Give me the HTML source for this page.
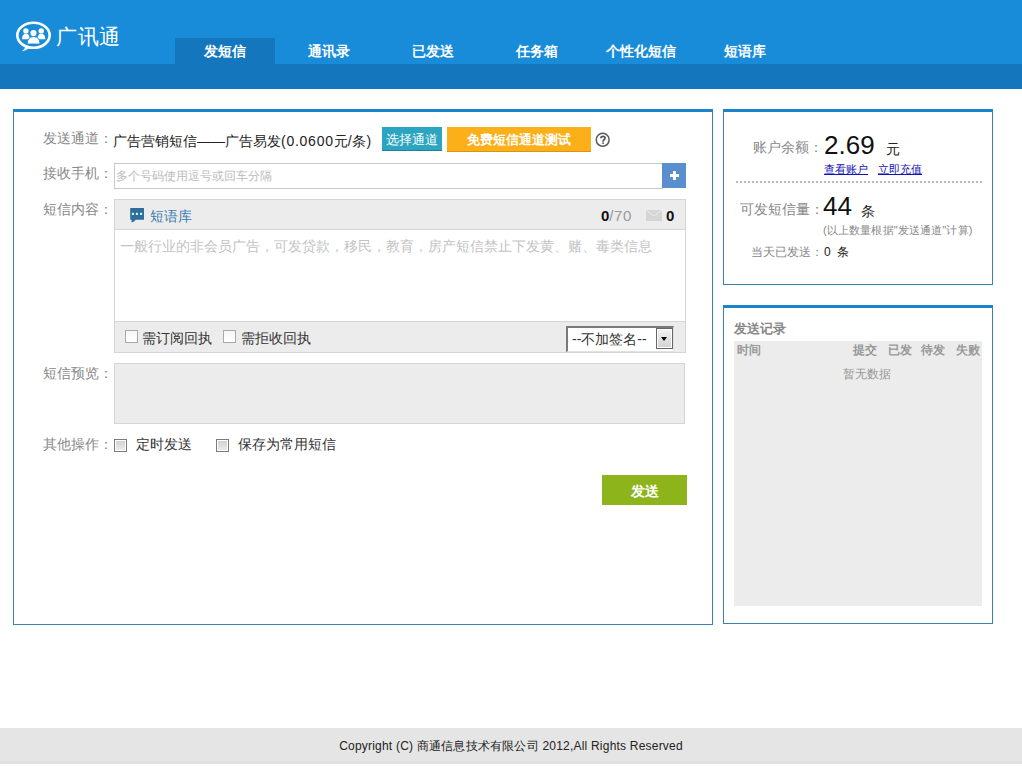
<!DOCTYPE html>
<html><head><meta charset="utf-8">
<style>
*{margin:0;padding:0;box-sizing:border-box}
html,body{width:1022px;height:766px;overflow:hidden;background:#fff;font-family:"Liberation Sans",sans-serif;font-size:14px;color:#333}
.a{position:absolute;white-space:nowrap}
#hdr{position:absolute;left:0;top:0;width:1022px;height:64px;background:#188bd9}
#band{position:absolute;left:0;top:64px;width:1022px;height:25px;background:#1477bd}
.tab{position:absolute;top:38px;width:100px;height:26px;color:#fff;font-weight:bold;font-size:14px;text-align:center;line-height:27px}
.tab.on{background:#1477bd}
.panel{position:absolute;border:1px solid #3a82b0;border-top:3px solid #1c84cd;background:#fff}
.lbl{color:#888;font-size:14px}
.box{position:absolute;border:1px solid #d5d5d5}
</style></head><body>
<div id="hdr"></div>
<div id="band"></div>
<!-- logo -->
<svg class="a" style="left:12px;top:18px" width="44" height="38" viewBox="12 18 44 38">
  <ellipse cx="33.5" cy="35.3" rx="16.2" ry="12.5" fill="none" stroke="#fff" stroke-width="2.6"/>
  <path d="M21.8 51.6 Q25 48.5 26.5 45.5 L30.5 47.2 Q26 50.5 21.8 51.6 Z" fill="#fff"/>
  <circle cx="25.9" cy="30.9" r="2.7" fill="#fff"/>
  <path d="M22 39.2 Q22.2 33.8 25.9 33.8 Q29.6 33.8 29.8 39.2 Z" fill="#fff"/>
  <circle cx="41.2" cy="30.9" r="2.7" fill="#fff"/>
  <path d="M37.4 39.2 Q37.6 33.8 41.3 33.8 Q45 33.8 45.4 39.2 Z" fill="#fff"/>
  <circle cx="33.5" cy="33" r="3.9" fill="#188bd9"/>
  <circle cx="33.5" cy="33" r="3.1" fill="#fff"/>
  <path d="M27.2 44 Q27.4 36.6 33.6 36.6 Q39.8 36.6 40 44 Z" fill="#fff" stroke="#188bd9" stroke-width="0.9"/>
</svg>
<div class="a" style="left:56px;top:23px;font-size:21px;letter-spacing:.6px;color:#fff;line-height:28px">广讯通</div>

<div class="tab on" style="left:175px">发短信</div>
<div class="tab" style="left:279px">通讯录</div>
<div class="tab" style="left:383px">已发送</div>
<div class="tab" style="left:487px">任务箱</div>
<div class="tab" style="left:591px">个性化短信</div>
<div class="tab" style="left:695px">短语库</div>

<!-- left panel -->
<div class="panel" style="left:13px;top:109px;width:700px;height:516px"></div>

<div class="a lbl" style="left:43px;top:128px;line-height:20px">发送通道：</div>
<div class="a" style="left:113px;top:131px;line-height:20px;color:#222">广告营销短信——广告易发<span style="letter-spacing:.75px">(0.0600</span>元<span style="letter-spacing:.75px">/</span>条)</div>
<div class="a" style="left:382px;top:127px;width:60px;height:24px;background:#2ca5c0;border-bottom:1px solid #1f7f98;color:#fff;font-size:12.5px;line-height:26px;text-align:center">选择通道</div>
<div class="a" style="left:447px;top:127px;width:144px;height:25px;background:#fbaf18;border-bottom:1px solid #d99317;color:#fff;font-size:13px;font-weight:bold;line-height:26px;text-align:center">免费短信通道测试</div>
<svg class="a" style="left:594px;top:132px" width="17" height="17" viewBox="0 0 17 17"><circle cx="8.7" cy="7.8" r="6.45" fill="none" stroke="#5a5a5a" stroke-width="1.5"/><path d="M6.9 6.3 C6.9 4.9 7.8 4.4 9 4.4 C10.3 4.4 11.1 5.1 11.1 6.1 C11.1 7.1 10.3 7.5 9.7 8 C9.2 8.5 9.05 9 9.05 9.7" fill="none" stroke="#555" stroke-width="1.7"/><rect x="8.1" y="10.5" width="1.9" height="1.3" fill="#555"/></svg>

<div class="a lbl" style="left:43px;top:163px;line-height:20px">接收手机：</div>
<div class="box" style="left:114px;top:163px;width:549px;height:26px;border-color:#c8c8c8"></div>
<div class="a" style="left:116px;top:168px;font-size:12px;color:#bbb;line-height:16px">多个号码使用逗号或回车分隔</div>
<div class="a" style="left:662px;top:163px;width:24px;height:25px;background:#5a8fcf"></div>
<div class="a" style="left:670px;top:171px;width:9px;height:3px;background:#fff;top:174px"></div>
<div class="a" style="left:673px;top:171px;width:3px;height:9px;background:#fff"></div>

<div class="a lbl" style="left:43px;top:199px;line-height:20px">短信内容：</div>
<div class="box" style="left:114px;top:199px;width:572px;height:154px;background:#fff"></div>
<div class="a" style="left:115px;top:200px;width:570px;height:30px;background:#ececec;border-bottom:1px solid #d5d5d5"></div>
<svg class="a" style="left:129px;top:207px" width="16" height="17" viewBox="0 0 16 17"><path d="M1.2 1 H15 V12.8 H6.8 Q5 15.2 2 15.6 Q3 14.5 2.6 12.8 H1.2 Z" fill="#2f6e98"/><rect x="2.9" y="5.8" width="2.1" height="2.2" fill="#c8f4ff"/><rect x="6.9" y="5.8" width="2.1" height="2.2" fill="#c8f4ff"/><rect x="11" y="5.8" width="2.1" height="2.2" fill="#c8f4ff"/></svg>
<div class="a" style="left:150px;top:206px;color:#3b7db3;font-size:14px;line-height:20px">短语库</div>
<div class="a" style="left:601px;top:206px;line-height:20px;font-size:15px"><b style="color:#111">0</b><span style="color:#999;letter-spacing:.6px">/70</span></div>
<svg class="a" style="left:646px;top:210px" width="16" height="11" viewBox="0 0 16 11"><rect x="0" y="0" width="16" height="11" fill="#d5d5d5"/><path d="M0 0 L8 6 L16 0" fill="none" stroke="#ececec" stroke-width="1"/></svg>
<div class="a" style="left:666px;top:206px;line-height:20px;font-size:15px;font-weight:bold;color:#111">0</div>
<div class="a" style="left:120px;top:236px;font-size:14px;color:#c3c3c3;line-height:20px">一般行业的非会员广告，可发贷款，移民，教育，房产短信禁止下发黄、赌、毒类信息</div>
<div class="a" style="left:115px;top:321px;width:570px;height:31px;background:#ececec;border-top:1px solid #d5d5d5"></div>
<div class="a" style="left:125px;top:330px;width:13px;height:13px;background:linear-gradient(#f6f6f6,#fff);border:1px solid #a9a9a9"></div>
<div class="a" style="left:142px;top:328px;line-height:20px;color:#333">需订阅回执</div>
<div class="a" style="left:223px;top:330px;width:13px;height:13px;background:linear-gradient(#f6f6f6,#fff);border:1px solid #a9a9a9"></div>
<div class="a" style="left:241px;top:328px;line-height:20px;color:#333">需拒收回执</div>
<div class="a" style="left:566px;top:326px;width:108px;height:26px;background:#fff;border:1px solid #e2e2e2;border-top:2px solid #7a7a7a;border-left:2px solid #7a7a7a"></div>
<div class="a" style="left:572px;top:329px;line-height:20px;color:#333">--不加签名--</div>
<div class="a" style="left:656px;top:328px;width:17px;height:21px;border:1px solid #666;background:linear-gradient(#f2f2f2,#d2d2d2);box-shadow:inset 0 0 0 1px #fff"></div>
<div class="a" style="left:661px;top:337px;width:0;height:0;border-left:3.5px solid transparent;border-right:3.5px solid transparent;border-top:4px solid #000"></div>

<div class="a lbl" style="left:43px;top:363px;line-height:20px">短信预览：</div>
<div class="box" style="left:114px;top:363px;width:571px;height:61px;background:#ececec"></div>

<div class="a lbl" style="left:43px;top:434px;line-height:20px">其他操作：</div>
<div class="a" style="left:114px;top:439px;width:13px;height:13px;border:1px solid #7a7a7a;background:linear-gradient(#cfcfcf,#eee);box-shadow:inset 0 0 0 1px #fff"></div>
<div class="a" style="left:136px;top:434px;line-height:20px;color:#333">定时发送</div>
<div class="a" style="left:216px;top:439px;width:13px;height:13px;border:1px solid #7a7a7a;background:linear-gradient(#cfcfcf,#eee);box-shadow:inset 0 0 0 1px #fff"></div>
<div class="a" style="left:238px;top:434px;line-height:20px;color:#333">保存为常用短信</div>

<div class="a" style="left:602px;top:475px;width:85px;height:30px;background:#8db51b;color:#fff;font-weight:bold;font-size:14px;line-height:32px;text-align:center">发送</div>

<!-- right panel 1 -->
<div class="panel" style="left:723px;top:109px;width:270px;height:176px"></div>
<div class="a lbl" style="left:753px;top:137px;line-height:20px">账户余额：</div>
<div class="a" style="left:824px;top:130px;font-size:26px;line-height:30px;color:#111">2.69</div>
<div class="a" style="left:886px;top:139px;font-size:14px;line-height:20px;color:#222">元</div>
<div class="a" style="left:824px;top:161px;font-size:11px;line-height:16px;color:#1212b4;text-decoration:underline">查看账户</div>
<div class="a" style="left:878px;top:161px;font-size:11px;line-height:16px;color:#1212b4;text-decoration:underline">立即充值</div>
<div class="a" style="left:736px;top:181px;width:246px;height:0;border-top:2px dotted #bbb"></div>
<div class="a lbl" style="left:740px;top:199px;line-height:20px">可发短信量：</div>
<div class="a" style="left:823px;top:191px;font-size:26px;line-height:30px;color:#111">44</div>
<div class="a" style="left:861px;top:201px;font-size:14px;line-height:20px;color:#222">条</div>
<div class="a" style="left:823px;top:222px;font-size:11px;letter-spacing:.15px;line-height:16px;color:#888">(以上数量根据"发送通道"计算)</div>
<div class="a lbl" style="left:751px;top:243px;line-height:18px;font-size:12px">当天已发送：</div>
<div class="a" style="left:824px;top:243px;line-height:18px;font-size:12px;color:#222">0</div><div class="a" style="left:837px;top:243px;line-height:18px;font-size:12px;color:#222">条</div>

<!-- right panel 2 -->
<div class="panel" style="left:723px;top:305px;width:270px;height:319px"></div>
<div class="a" style="left:734px;top:320px;font-size:13px;font-weight:bold;color:#888;line-height:18px">发送记录</div>
<div class="a" style="left:734px;top:341px;width:248px;height:265px;background:#ececec"></div>
<div class="a" style="left:737px;top:342px;font-size:12px;font-weight:bold;color:#999;line-height:17px">时间</div>
<div class="a" style="left:853px;top:342px;font-size:12px;font-weight:bold;color:#999;line-height:17px">提交</div>
<div class="a" style="left:888px;top:342px;font-size:12px;font-weight:bold;color:#999;line-height:17px">已发</div>
<div class="a" style="left:921px;top:342px;font-size:12px;font-weight:bold;color:#999;line-height:17px">待发</div>
<div class="a" style="left:956px;top:342px;font-size:12px;font-weight:bold;color:#999;line-height:17px">失败</div>
<div class="a" style="left:843px;top:366px;font-size:12px;color:#999;line-height:17px">暂无数据</div>

<!-- footer -->
<div class="a" style="left:0;top:728px;width:1022px;height:36px;background:#e5e5e5;border-bottom:3px solid #e1e1e1"></div>
<div class="a" style="left:0;top:738px;width:1022px;text-align:center;font-size:12px;letter-spacing:.21px;line-height:17px;color:#222">Copyright (C) 商通信息技术有限公司 2012,All Rights Reserved</div>
</body></html>
